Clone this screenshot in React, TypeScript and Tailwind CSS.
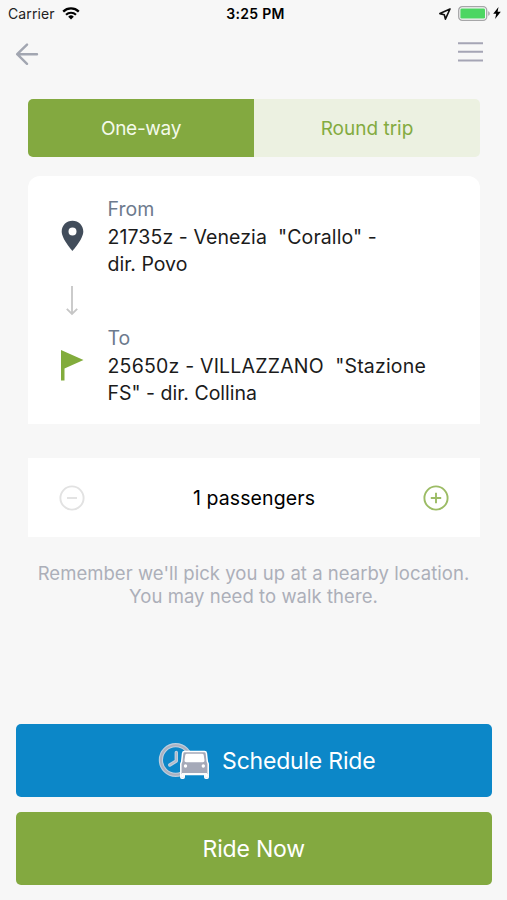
import type { ReactNode } from 'react'

function StatusBar() {
  return (
    <div className="relative flex h-7 items-center justify-between pl-2 pr-1.5">
      <div className="flex items-center gap-[7px]">
        <span className="text-[14px] leading-7 tracking-[0.1px] text-[#222]">Carrier</span>
        <svg className="-mt-px h-[13px] w-[18px]" viewBox="0 0 18 13" fill="none" stroke="#000">
          <path d="M1.2 4.6a11.2 11.2 0 0 1 15.6 0" strokeWidth="2.3" />
          <path d="M4 7.7a7.2 7.2 0 0 1 10 0" strokeWidth="2.1" />
          <path d="M9 12.5 6.2 9.7a4 4 0 0 1 5.6 0z" fill="#000" stroke="none" />
        </svg>
      </div>
      <span className="absolute left-1/2 -translate-x-1/2 pl-1 text-[14px] font-semibold leading-7 tracking-[0.3px] text-black">
        3:25 PM
      </span>
      <div className="flex items-center">
        <svg className="-mt-px mr-[7px] h-3 w-3" viewBox="0 0 12 12" fill="none" stroke="#111" strokeWidth="1.6" strokeLinejoin="round">
          <path d="M11 1 .9 5.6l4.4 1.1 1.1 4.4z" />
        </svg>
        <svg className="-mt-0.5 h-[15px] w-8" viewBox="0 0 32 15" fill="none">
          <rect x=".7" y=".7" width="28" height="13.6" rx="3.6" stroke="#a6a6a8" strokeWidth="1.3" />
          <rect x="2.4" y="2.4" width="24.6" height="10.2" rx="1.4" fill="#4cd662" />
          <path d="M30.2 5.2c2.1.7 2.1 3.9 0 4.6z" fill="#a6a6a8" />
        </svg>
        <svg className="-mt-0.5 ml-[3px] h-3 w-2" viewBox="0 0 8 12" fill="#000">
          <path d="M5.5 0 .2 6.8h3L2.1 12 7.8 4.8H4.6z" />
        </svg>
      </div>
    </div>
  )
}

function Header() {
  return (
    <header className="flex h-[70.5px] items-start justify-between pl-[15px] pr-6">
      <svg className="mt-[15px] h-6 w-6" viewBox="0 0 24 24" fill="none" stroke="#a2a6b1" strokeWidth="2.4" strokeLinecap="round" strokeLinejoin="round">
        <path d="M22 11.2H2.2M12 1.6l-9.8 9.6 9.8 9.6" />
      </svg>
      <svg className="mt-[13px] h-[22px] w-[25px]" viewBox="0 0 25 22" stroke="#a5a5b5" strokeWidth="2">
        <path d="M0 2.2h25M0 10.8h25M0 19.5h25" />
      </svg>
    </header>
  )
}

interface StopProps {
  label: string
  children: ReactNode
  icon: ReactNode
}

function Stop({ label, children, icon }: StopProps) {
  return (
    <div className="flex">
      <div className="flex w-[79.5px] shrink-0 justify-center pl-[9.5px]">{icon}</div>
      <div className="whitespace-pre text-[19.5px] leading-[27px] text-[#1b1b1b]">
        <p className="-mt-px mb-px text-[#6d7a8d]">{label}</p>
        {children}
      </div>
    </div>
  )
}

function RideIcon() {
  return (
    <svg className="h-[38px] w-[52px]" viewBox="0 0 52 38" fill="none">
      <circle cx="17.7" cy="18" r="14.8" stroke="#bcd0e0" strokeWidth="4.2" />
      <circle cx="17.7" cy="18" r="14.8" stroke="#aab0c0" strokeWidth="2" />
      <path d="M18.3 10.5V19l-6.5 4" stroke="#c0d0df" strokeWidth="3.4" strokeLinecap="round" strokeLinejoin="round" />
      <path d="M18.3 10.5V19l-6.5 4" stroke="#b3b9c8" strokeWidth="1.4" strokeLinecap="round" strokeLinejoin="round" />
      <path
        d="M26.500 9.500h20q1.700 0 1.900 1.800l.9 8.200.9 2.200v13.600q0 1-1 1h-1.400q-1 0-1-1v-2.800H26.200v2.800q0 1-1 1h-1.400q-1 0-1-1V21.700l.9-2.200.9-8.200q.2-1.800 1.900-1.800z"
        fill="#a5a9b8"
        stroke="#fff"
        strokeWidth="1.500"
        strokeLinejoin="round"
      />
      <path d="M29 11.700h15q1.500 0 1.700 1.400l.8 5.200q.2 1.900-1.600 1.900H28.100q-1.800 0-1.600-1.900l.8-5.200q.2-1.400 1.700-1.400z" fill="#fff" />
      <circle cx="27.5" cy="24" r="1.7" fill="#fff" />
      <circle cx="45.3" cy="24" r="1.7" fill="#fff" />
      <path d="M24 31.800h25" stroke="#fff" strokeWidth="1.5" />
      <path d="M24.500 32v3.600M48.500 32v3.600" stroke="#fff" strokeWidth="2.6" />
    </svg>
  )
}

export default function App() {
  return (
    <div className="flex h-[900px] w-full max-w-[507px] flex-col overflow-hidden bg-[#f7f7f7] font-['Inter',sans-serif]">
      <StatusBar />
      <Header />

      <div className="ml-7 mr-[27px] flex h-[58.5px] overflow-hidden rounded-[5px] text-[19px]">
        <button className="w-1/2 bg-[#83a940] pt-0.5 tracking-[-0.3px] text-[#f4faea]">One-way</button>
        <button className="w-1/2 bg-[#ecf1e1] pt-0.5 text-[#83ab3f]">Round trip</button>
      </div>

      <section className="ml-7 mr-[27px] mt-[19px] h-[248px] rounded-t-xl bg-white pt-[21px]">
        <Stop
          label="From"
          icon={
            <svg className="mt-[23px] h-8 w-[23px]" viewBox="0 0 23 32">
              <path fillRule="evenodd" d="M11.5.8C5.4.8.7 5.5.7 11.5c0 7.600 10.800 19.500 10.800 19.500s10.800-11.900 10.800-19.500C22.300 5.500 17.600.8 11.5.8zm0 6.600a4 4 0 1 1 0 8 4 4 0 0 1 0-8z" fill="#424d5b" />
            </svg>
          }
        >
          <p className="tracking-[0.09px]">{'21735z - Venezia  "Corallo" -'}</p>
          <p>dir. Povo</p>
        </Stop>
        <div className="flex h-12 w-[79.5px] justify-center pl-2 pt-[7px]">
          <svg className="h-8 w-3" viewBox="0 0 12 32" fill="none" stroke="#c6c6c6" strokeWidth="1.8">
            <path d="M6 1v28M.8 23.8 6 29l5.2-5.2" />
          </svg>
        </div>
        <Stop
          label="To"
          icon={
            <svg className="mt-[23px] h-8 w-[23px]" viewBox="0 0 23 32" fill="#82ac3c">
              <path d="M0 1 22.5 11 3.500 19.500V31.500H0z" />
            </svg>
          }
        >
          <p className="tracking-[0.2px]">{'25650z - VILLAZZANO  "Stazione'}</p>
          <p>FS" - dir. Collina</p>
        </Stop>
      </section>

      <section className="ml-7 mr-[27px] mt-[34px] flex h-[79px] items-center justify-between bg-white px-[31px]">
        <svg className="h-[26px] w-[26px]" viewBox="0 0 26 26" fill="none" stroke="#e2e2e2" strokeWidth="1.9">
          <circle cx="13" cy="13" r="11.6" />
          <path d="M8 13h10" />
        </svg>
        <span className="pt-0.5 text-[19.5px] tracking-[0.1px] text-black">1 passengers</span>
        <svg className="h-[26px] w-[26px]" viewBox="0 0 26 26" fill="none" stroke="#9cbc65" strokeWidth="1.9">
          <circle cx="13" cy="13" r="11.6" />
          <path d="M7.8 13h10.4M13 7.8v10.4" />
        </svg>
      </section>

      <p className="mt-[25px] text-center text-[18.5px] leading-[23px] tracking-[0.05px] text-[#acafb9]">
        Remember we'll pick you up at a nearby location.
        <br />
        You may need to walk there.
      </p>

      <div className="mb-[15px] ml-[15.5px] mr-[15px] mt-auto flex flex-col gap-[15px] text-[23px] text-white">
        <button className="flex h-[73px] items-center justify-center gap-3 rounded-[5px] bg-[#0c87c8] pl-[26px]">
          <RideIcon />
          <span className="pt-0.5 tracking-[-0.2px]">Schedule Ride</span>
        </button>
        <button className="h-[73px] rounded-[5px] bg-[#83a940] pt-0.5 tracking-[-0.2px]">Ride Now</button>
      </div>
    </div>
  )
}
